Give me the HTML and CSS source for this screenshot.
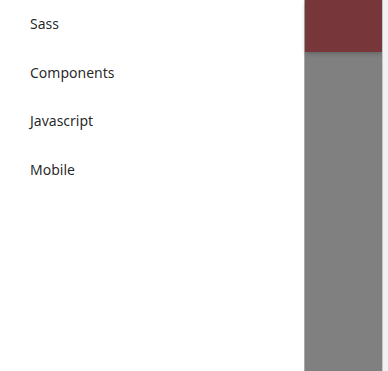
FILE: index.html
```html
<!DOCTYPE html>
<html>
<head>
<meta charset="utf-8">
<link rel="stylesheet" href="styles.css">
</head>
<body>
<div class="screen">
  <ul class="sidenav">
    <li><a href="#">Sass</a></li>
    <li><a href="#">Components</a></li>
    <li><a href="#">Javascript</a></li>
    <li><a href="#">Mobile</a></li>
  </ul>
  <div class="page">
    <div class="navbar"></div>
    <div class="content"></div>
  </div>
  <div class="scrollbar"></div>
</div>
</body>
</html>
```
FILE: styles.css
```css
html, body {
  margin: 0;
  padding: 0;
  height: 100%;
}
.screen {
  display: flex;
  height: 371px;
  width: 388px;
  font-family: "Noto Sans", "Open Sans", sans-serif;
}
.sidenav {
  list-style: none;
  margin: 0;
  padding: 0;
  width: 304px;
  flex: none;
  background: #fff;
}
.sidenav li a {
  display: block;
  height: 48.7px;
  line-height: 48.7px;
  padding: 0 30px;
  font-size: 14px;
  color: rgba(0,0,0,0.87);
  text-decoration: none;
}
.page {
  flex: 1;
  display: flex;
  flex-direction: column;
  background: #808080;
  border-left: 1px solid #a8a8a8;
}
.navbar {
  height: 52px;
  background: #77373a;
  box-shadow: 0 2px 4px rgba(0,0,0,0.2);
}
.content {
  flex: 1;
}
.scrollbar {
  width: 5px;
  flex: none;
  background: #f1f1f1;
  border-left: 1px solid #c8c8c8;
}
```
